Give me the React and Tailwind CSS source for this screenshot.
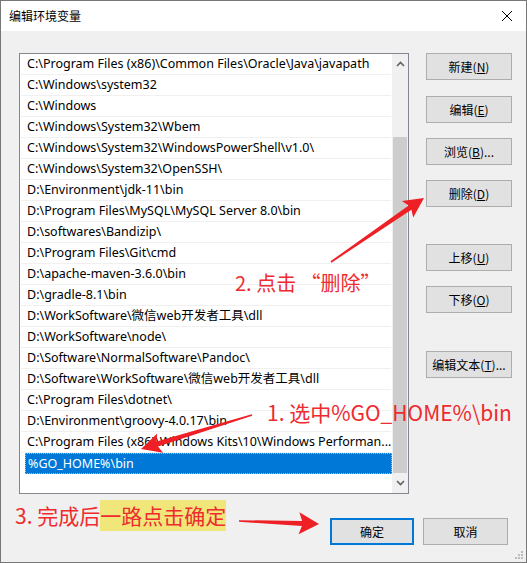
import React from "react";

const paths = [
  "C:\\Program Files (x86)\\Common Files\\Oracle\\Java\\javapath",
  "C:\\Windows\\system32",
  "C:\\Windows",
  "C:\\Windows\\System32\\Wbem",
  "C:\\Windows\\System32\\WindowsPowerShell\\v1.0\\",
  "C:\\Windows\\System32\\OpenSSH\\",
  "D:\\Environment\\jdk-11\\bin",
  "D:\\Program Files\\MySQL\\MySQL Server 8.0\\bin",
  "D:\\softwares\\Bandizip\\",
  "D:\\Program Files\\Git\\cmd",
  "D:\\apache-maven-3.6.0\\bin",
  "D:\\gradle-8.1\\bin",
  "D:\\WorkSoftware\\微信web开发者工具\\dll",
  "D:\\WorkSoftware\\node\\",
  "D:\\Software\\NormalSoftware\\Pandoc\\",
  "D:\\Software\\WorkSoftware\\微信web开发者工具\\dll",
  "C:\\Program Files\\dotnet\\",
  "D:\\Environment\\groovy-4.0.17\\bin",
  "C:\\Program Files (x86)\\Windows Kits\\10\\Windows Performan...",
];

const font = "font-['Noto_Sans','Noto_Sans_CJK_SC',sans-serif]";
const cjk = "font-['Noto_Sans_CJK_SC','Noto_Sans',sans-serif]";

// tapered red arrow, tail -> tip
function arrowPoints(sx, sy, ex, ey, head = 20, half = 10, shaft = 3) {
  const dx = ex - sx;
  const dy = ey - sy;
  const len = Math.hypot(dx, dy);
  const ux = dx / len;
  const uy = dy / len;
  const nx = -uy;
  const ny = ux;
  const at = (d, w) => `${(sx + ux * d + nx * w).toFixed(1)},${(sy + uy * d + ny * w).toFixed(1)}`;
  const b = len - head;
  return [at(0, 0.8), at(b + 3, shaft), at(b, half), `${ex},${ey}`, at(b, -half), at(b + 3, -shaft), at(0, -0.8)].join(" ");
}

const Btn = ({ children, className = "" }) => (
  <button className={`w-[86px] h-[27px] bg-[#e1e1e1] border border-[#adadad] text-[12px] text-black ${cjk} ${className}`}>
    {children}
  </button>
);

export default function App() {
  return (
    <div className="relative w-[527px] h-[563px] border border-[#777] bg-[#f0f0f0] flex flex-col overflow-hidden">
      {/* title bar */}
      <div className="h-[30px] bg-white flex items-center justify-between pl-[8px] pr-[12px]">
        <span className={`text-[12px] text-black ${cjk}`}>编辑环境变量</span>
        <svg width="12" height="12" viewBox="0 0 12 12" className="mr-[1px]">
          <path d="M1 1L11 11M11 1L1 11" stroke="#000" strokeWidth="1" />
        </svg>
      </div>

      <div className="flex pl-[18px] pt-[22px]">
        {/* list box */}
        <div className="w-[390px] h-[441px] bg-white border border-[#828790] flex">
          <div className="flex-1 flex flex-col">
            {paths.map((p) => (
              <div key={p} className={`h-[21px] mx-[1px] border-b border-[#f0f0f0] pl-[6px] pt-[1px] flex items-center text-[12.5px] text-black whitespace-nowrap ${font}`}>
                {p}
              </div>
            ))}
            <div className="h-[21px] ml-[5px] bg-[#0078d7] border border-dotted border-[#f5b15b] pl-[2px] pt-[1px] flex items-center text-[12.5px] text-white whitespace-nowrap">
              <span className={font}>%GO_HOME%\bin</span>
            </div>
          </div>
          {/* scrollbar */}
          <div className="w-[17px] bg-[#f0f0f0] flex flex-col">
            <div className="h-[20px] flex items-center justify-center">
              <svg width="9" height="6" viewBox="0 0 9 6">
                <path d="M1 5L4.5 1.5L8 5" stroke="#606060" strokeWidth="1.6" fill="none" />
              </svg>
            </div>
            <div className="h-[63px]" />
            <div className="flex-1 mx-[1px] bg-[#cdcdcd]" />
            <div className="h-[20px] flex items-center justify-center">
              <svg width="9" height="6" viewBox="0 0 9 6">
                <path d="M1 1L4.5 4.5L8 1" stroke="#606060" strokeWidth="1.6" fill="none" />
              </svg>
            </div>
          </div>
        </div>

        {/* right buttons */}
        <div className="ml-[17px] flex flex-col">
          <Btn>新建(<u>N</u>)</Btn>
          <Btn className="mt-[16px]">编辑(<u>E</u>)</Btn>
          <Btn className="mt-[15px]">浏览(<u>B</u>)...</Btn>
          <Btn className="mt-[15px]">删除(<u>D</u>)</Btn>
          <Btn className="mt-[37px]">上移(<u>U</u>)</Btn>
          <Btn className="mt-[15px]">下移(<u>O</u>)</Btn>
          <Btn className="mt-[38px]">编辑文本(<u>T</u>)...</Btn>
        </div>
      </div>

      {/* bottom buttons */}
      <div className="flex justify-end gap-[9px] pr-[18px] mt-[24px]">
        <button className={`w-[84px] h-[27px] bg-[#e1e1e1] border-2 border-[#0078d7] text-[12px] text-black ${cjk}`}>确定</button>
        <button className={`w-[85px] h-[27px] bg-[#e1e1e1] border border-[#adadad] text-[12px] text-black ${cjk}`}>取消</button>
      </div>

      {/* resize grip */}
      <svg className="absolute right-[2px] bottom-[2px]" width="10" height="10" viewBox="0 0 10 10">
        {[[7, 1], [4, 4], [7, 4], [1, 7], [4, 7], [7, 7]].map(([x, y]) => (
          <rect key={`${x}-${y}`} x={x} y={y} width="2" height="2" fill="#bcbcbc" />
        ))}
      </svg>

      {/* annotations */}
      <span className={`absolute left-[234px] top-[268px] text-[20px] leading-[28px] text-[#ee2b2f] whitespace-nowrap ${cjk}`}>
        2. 点击 “删除”
      </span>
      <span className={`absolute left-[266px] top-[397px] text-[21px] leading-[28px] text-[#ee2b2f] whitespace-nowrap ${cjk}`}>
        1. 选中%GO_HOME%\bin
      </span>
      <div className={`absolute left-[14px] top-[499px] h-[31px] flex items-center text-[21px] text-[#ee2b2f] whitespace-nowrap ${cjk}`}>
        <span>3. 完成后</span>
        <span className="bg-[#f0e67a] h-[31px] flex items-center">一路点击确定</span>
      </div>

      <svg className="absolute left-0 top-0 pointer-events-none" width="527" height="563">
        <polygon points={arrowPoints(330, 261, 423, 197, 20, 10, 2.5)} fill="#ee2026" />
        <polygon points={arrowPoints(251, 414, 140, 448, 20, 10, 2.5)} fill="#ee2026" />
        <polygon points={arrowPoints(238, 520, 318, 523, 20, 11, 2.5)} fill="#ee2026" />
      </svg>
    </div>
  );
}
